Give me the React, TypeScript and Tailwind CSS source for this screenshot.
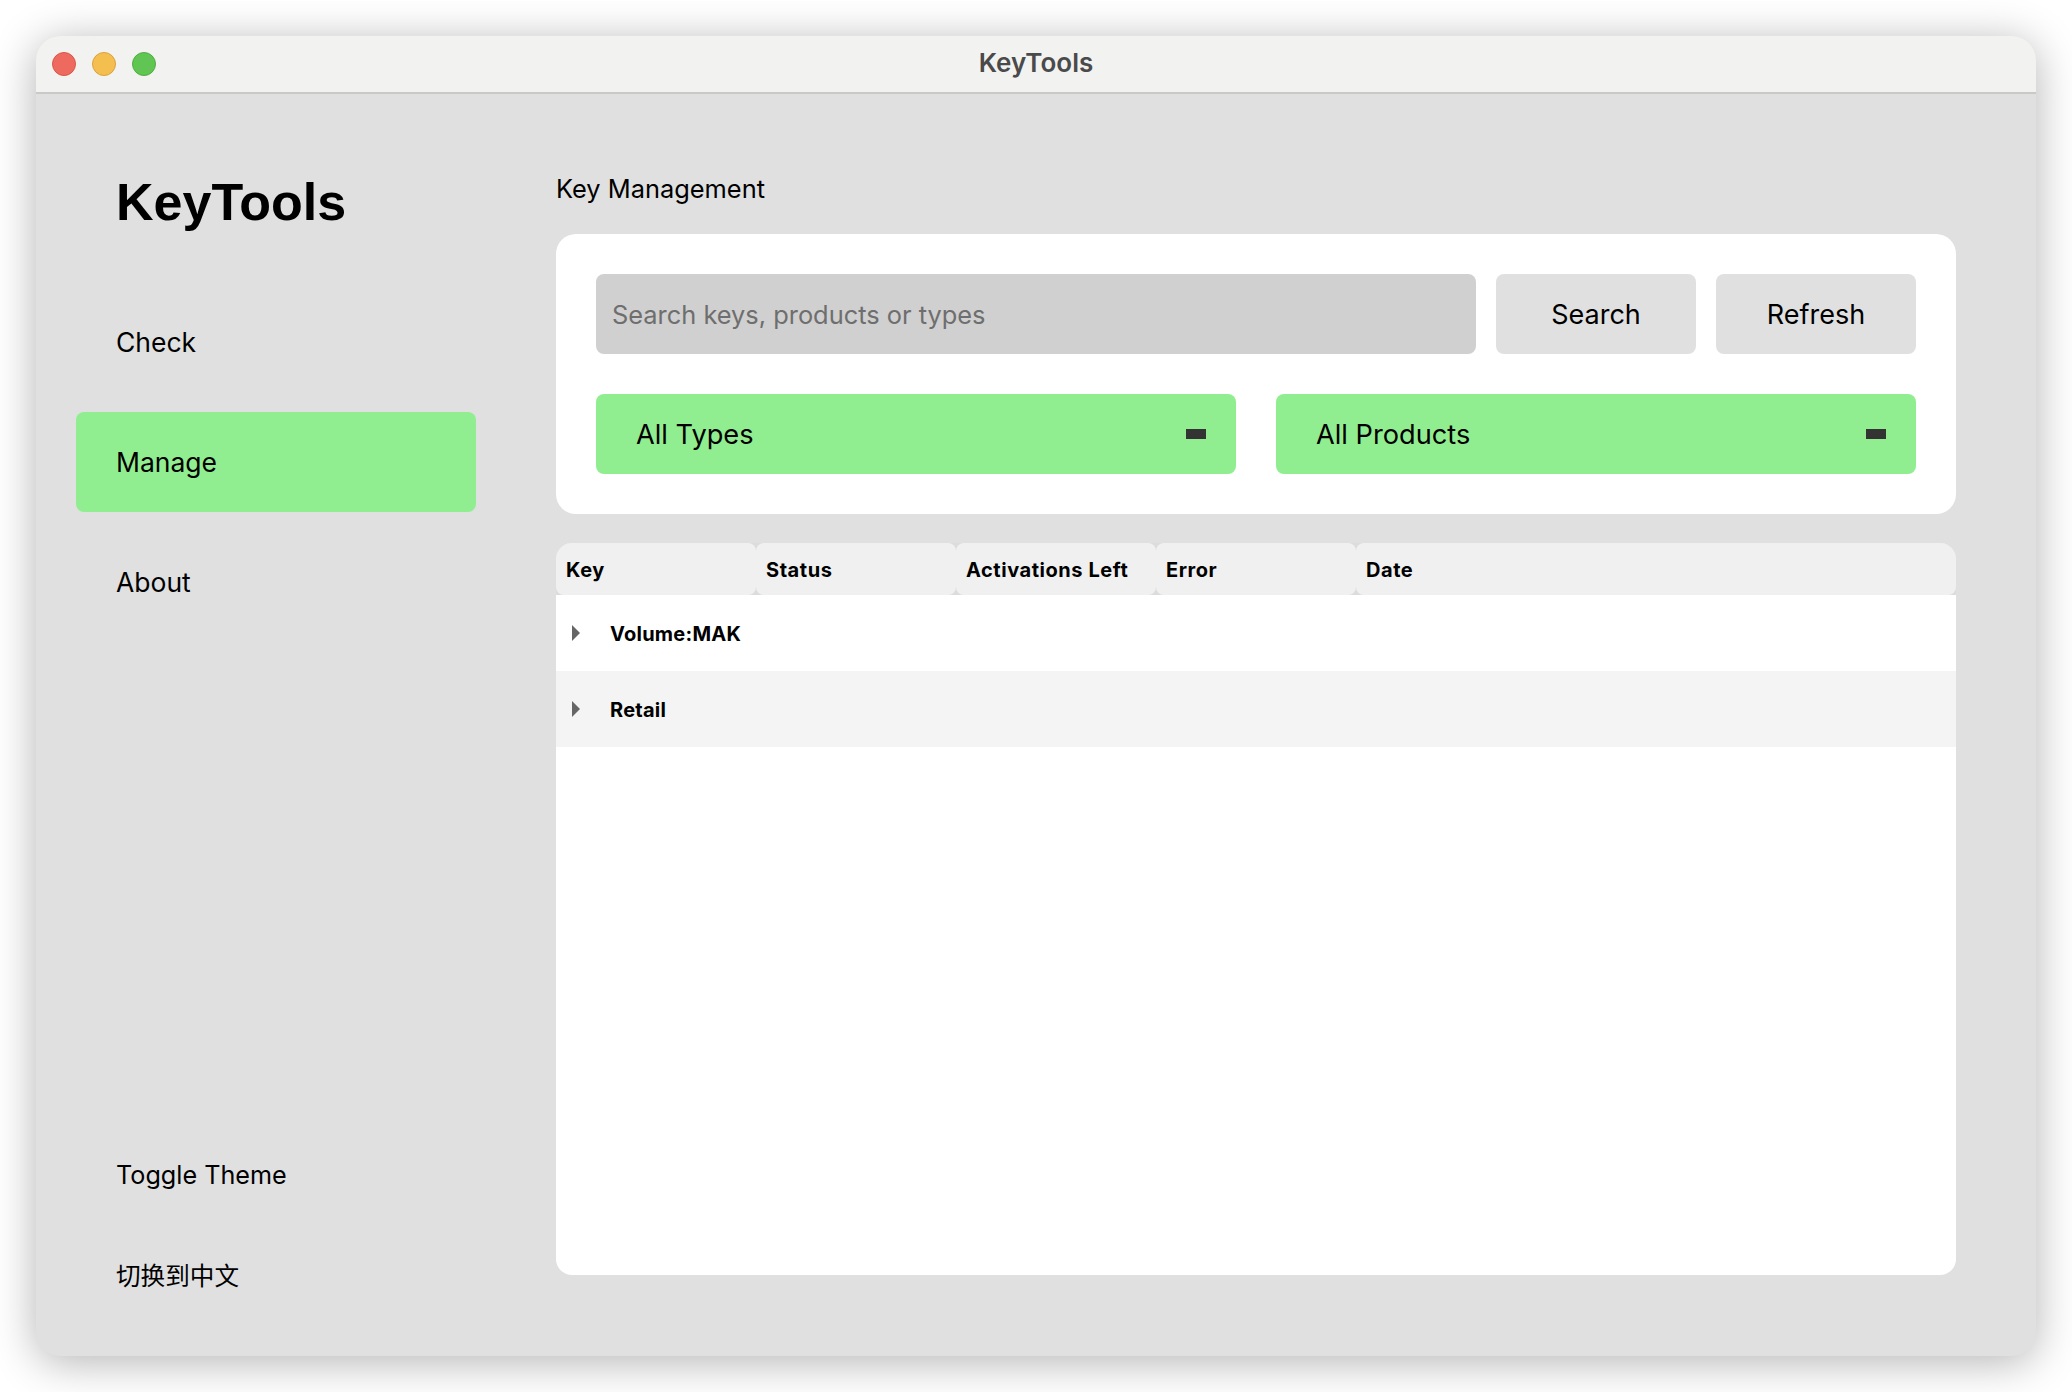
const columns = ['Key', 'Status', 'Activations Left', 'Error', 'Date']

function NavItem({ label, active }: { label: string; active?: boolean }) {
  return (
    <div className={`flex h-[100px] items-center rounded-lg px-10 pt-[1px] text-[26.5px] text-black ${active ? 'bg-[#90ee90]' : ''}`}>
      {label}
    </div>
  )
}

function Dropdown({ label }: { label: string }) {
  return (
    <div className="flex h-20 flex-1 items-center justify-between rounded-lg bg-[#90ee90] pl-10 pr-[30px] text-[27.2px] text-black">
      <span className="pt-[2px]">{label}</span>
      <span className="h-[10px] w-5 bg-[#333333]" />
    </div>
  )
}

function GroupRow({ label, striped }: { label: string; striped?: boolean }) {
  return (
    <div className={`flex h-[76px] items-center pl-4 ${striped ? 'bg-[#f4f4f4]' : 'bg-white'}`}>
      <svg width="8" height="16" viewBox="0 0 8 16" className="shrink-0">
        <path d="M0 0 L8 8 L0 16 Z" fill="#666666" />
      </svg>
      <span className="ml-[30px] pt-[1px] text-[20px] font-bold tracking-[0.25px] text-black">{label}</span>
    </div>
  )
}

export default function App() {
  return (
    <div className="h-screen w-full overflow-hidden bg-white p-9 font-['Inter','Noto_Sans_CJK_SC',sans-serif]">
      <div className="flex h-[1320px] w-[2000px] flex-col overflow-hidden rounded-[24px] bg-[#e0e0e0] shadow-[0_6px_44px_rgba(0,0,0,0.3)]">
        {/* Title bar */}
        <div className="relative flex h-[58px] shrink-0 items-center justify-center border-b-2 border-[#c9c9c8] bg-[#f2f2f0]">
          <div className="absolute left-4 top-4 flex gap-4">
            <span className="h-6 w-6 rounded-full border border-[#d9544c] bg-[#ee6a5f]" />
            <span className="h-6 w-6 rounded-full border border-[#dba03f] bg-[#f5bf4f]" />
            <span className="h-6 w-6 rounded-full border border-[#4fae43] bg-[#61c554]" />
          </div>
          <span className="pb-[3px] text-[26px] font-semibold text-[#4a4a4a]">KeyTools</span>
        </div>

        <div className="flex min-h-0 flex-1">
          {/* Sidebar */}
          <div className="flex w-[520px] shrink-0 flex-col pb-10 pl-10 pr-20 pt-[78px]">
            <h1 className="mb-[60px] h-[60px] pl-10 font-['Liberation_Sans',sans-serif] text-[52px] font-bold leading-[60px] text-black">
              KeyTools
            </h1>
            <div className="flex flex-col gap-5">
              <NavItem label="Check" />
              <NavItem label="Manage" active />
              <NavItem label="About" />
            </div>
            <div className="mt-auto flex flex-col gap-5 text-black">
              <div className="flex h-20 items-center pl-10 text-[25.2px]">Toggle Theme</div>
              <div className="flex h-20 items-center pl-10 text-[24.6px]">切换到中文</div>
            </div>
          </div>

          {/* Main */}
          <div className="flex min-w-0 flex-1 flex-col pb-[81px] pr-20 pt-[78px]">
            <div className="mb-[28px] h-[34px] text-[25.4px] leading-[34px] text-black">Key Management</div>

            <div className="flex flex-col gap-10 rounded-[20px] bg-white p-10">
              <div className="flex gap-5">
                <input
                  placeholder="Search keys, products or types"
                  className="h-20 min-w-0 flex-1 rounded-lg bg-[#d0d0d0] px-4 text-[25.4px] text-black outline-none placeholder:text-[#6e6e6e]"
                />
                <button className="h-20 w-[200px] rounded-lg bg-[#e0e0e0] pt-[2px] text-[27px] text-black">Search</button>
                <button className="h-20 w-[200px] rounded-lg bg-[#e0e0e0] pt-[2px] text-[27px] text-black">Refresh</button>
              </div>
              <div className="flex gap-10">
                <Dropdown label="All Types" />
                <Dropdown label="All Products" />
              </div>
            </div>

            {/* Key table */}
            <div className="mt-[29px] flex min-h-0 flex-1 flex-col overflow-hidden rounded-[16px] bg-white">
              <div className="flex h-[52px] shrink-0 bg-[#dcdcdc]">
                {columns.map((col, i) => (
                  <div
                    key={col}
                    className={`flex items-center rounded-lg bg-[#f0f0f0] pl-[10px] pt-[2px] text-[20px] font-bold tracking-[0.55px] text-black ${i === columns.length - 1 ? 'flex-1' : 'w-[200px]'}`}
                  >
                    {col}
                  </div>
                ))}
              </div>
              <GroupRow label="Volume:MAK" />
              <GroupRow label="Retail" striped />
            </div>
          </div>
        </div>
      </div>
    </div>
  )
}
